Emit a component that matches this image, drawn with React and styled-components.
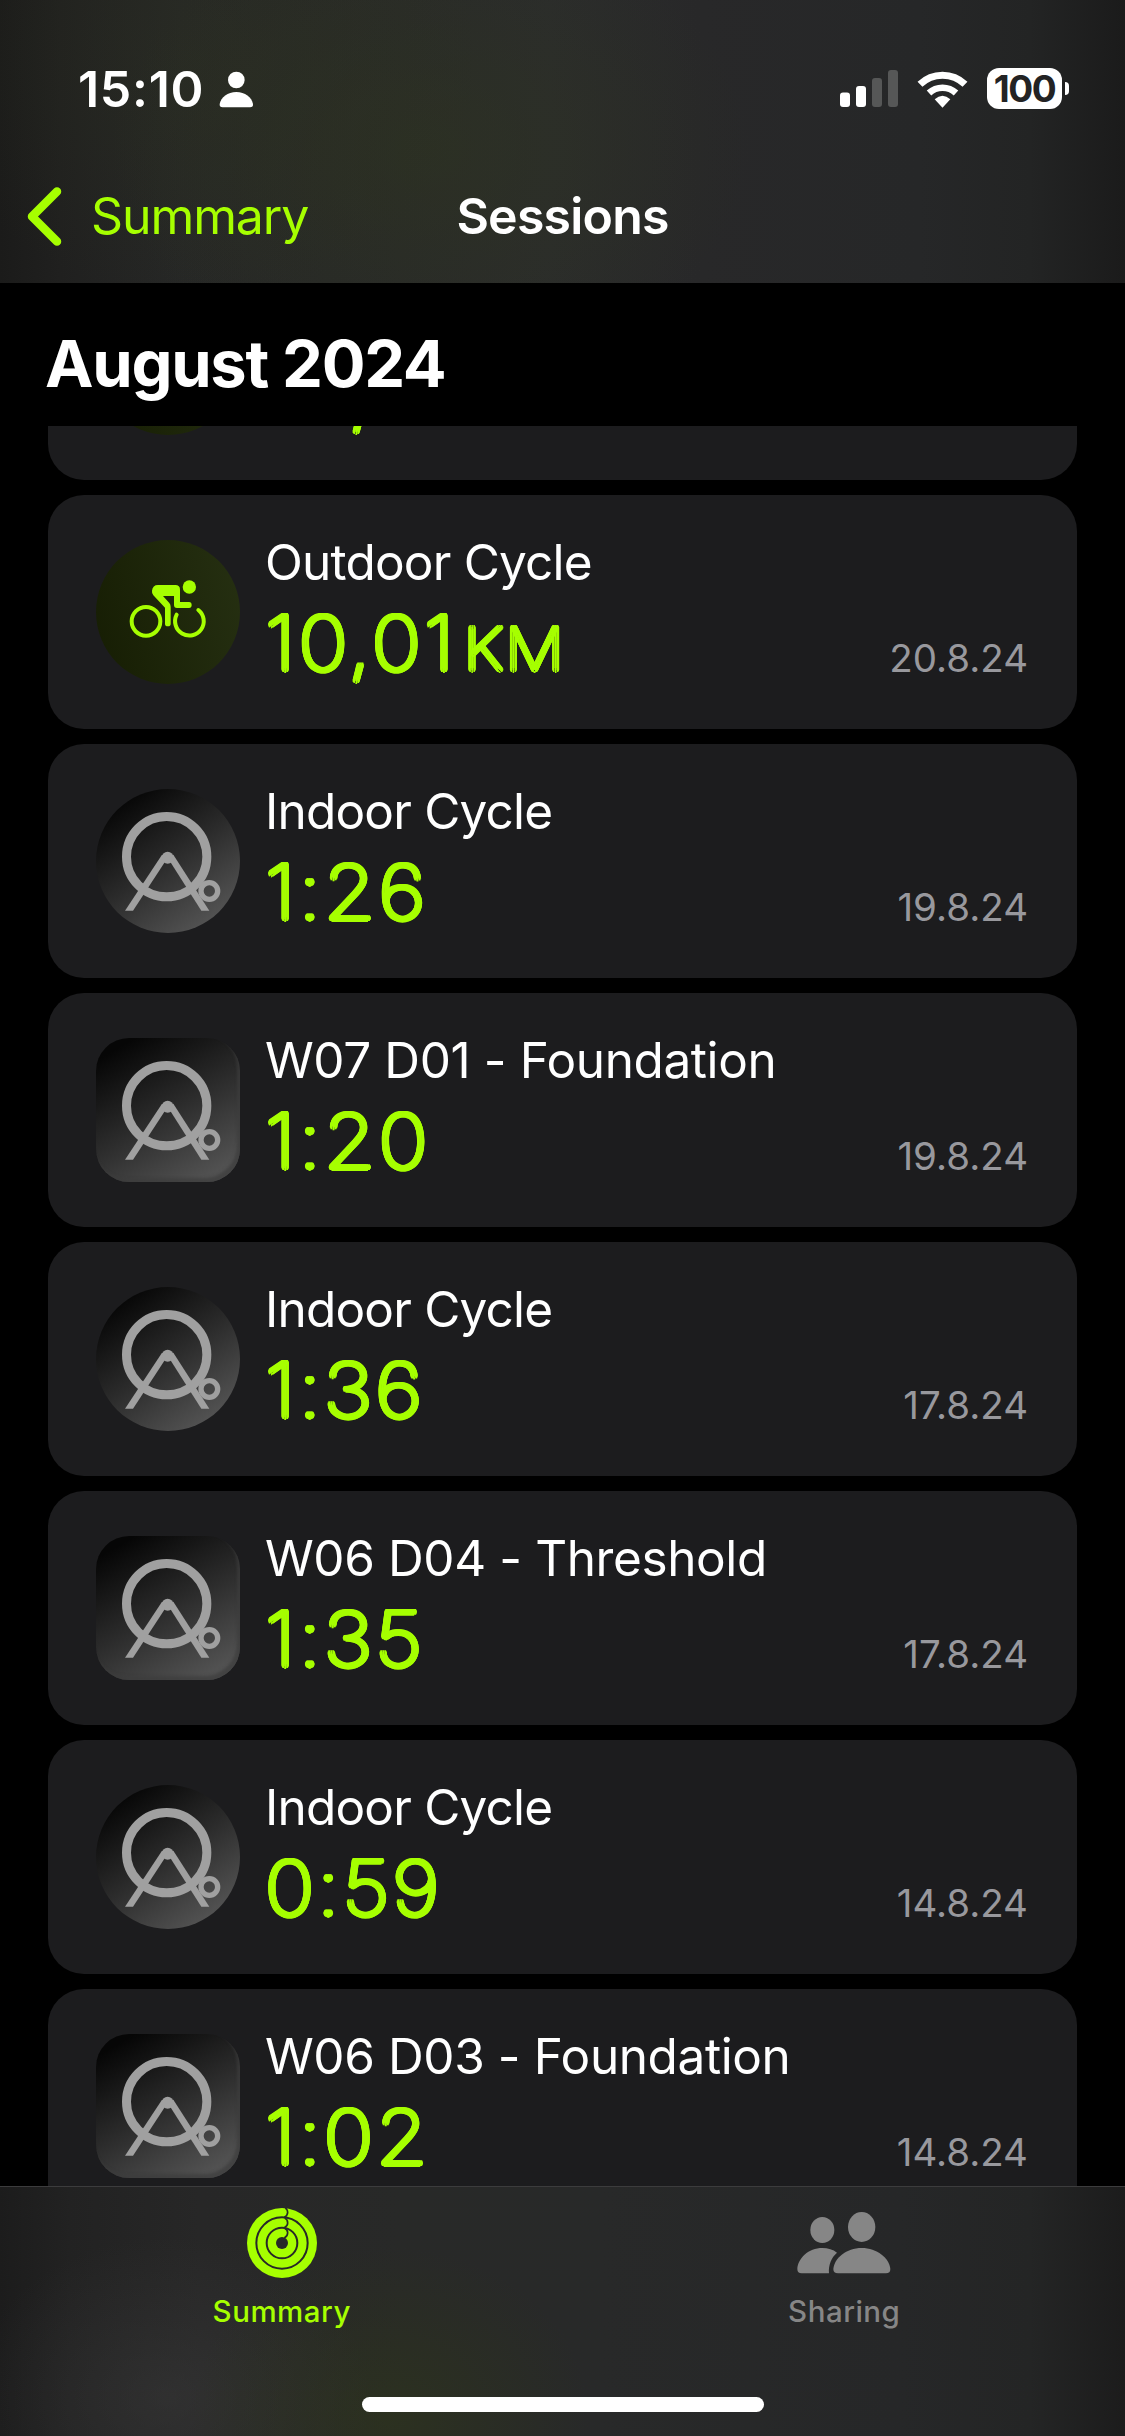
import React from 'react'
import styled, { createGlobalStyle } from 'styled-components'

const green = '#a6ff00'

const sessions = [
  { kind: 'outdoor', value: '10,01' },
  { kind: 'outdoor', title: 'Outdoor Cycle', value: '10,01', unit: 'KM', date: '20.8.24' },
  { kind: 'indoor', title: 'Indoor Cycle', value: '1:26', date: '19.8.24' },
  { kind: 'app', title: 'W07 D01 - Foundation', value: '1:20', date: '19.8.24' },
  { kind: 'indoor', title: 'Indoor Cycle', value: '1:36', date: '17.8.24' },
  { kind: 'app', title: 'W06 D04 - Threshold', value: '1:35', date: '17.8.24' },
  { kind: 'indoor', title: 'Indoor Cycle', value: '0:59', date: '14.8.24' },
  { kind: 'app', title: 'W06 D03 - Foundation', value: '1:02', date: '14.8.24' },
]

function CyclistIcon() {
  return (
    <svg width='144' height='144' viewBox='48 60 432 432' fill='none' stroke={green}>
      <circle cx='198' cy='304' r='43' strokeWidth='12' />
      <path d='M290 284 A43 43 0 1 0 355 270' strokeWidth='12' strokeLinecap='round' />
      <circle cx='328' cy='201' r='20' fill={green} stroke='none' />
      <path
        d='M234 195 H286 Q300 195 300 209 V246 H327 Q335 246 335 255 Q335 264 327 264 H291 Q282 264 282 255 V228 H249 L268 249 Q272 254 272 261 V311 Q272 319 263.500 319 Q255 319 255 311 V263 L220 226 Q215 220 216 212 Q218 195 234 195 Z'
        fill={green}
        stroke='none'
      />
    </svg>
  )
}

function TrainerIcon() {
  return (
    <svg width='144' height='144' viewBox='48 57 432 432' fill='#a0a0a0'>
      <circle cx='260' cy='260' r='120.500' fill='none' stroke='#a0a0a0' strokeWidth='27' />
      <path d='M135 422 L246 254 L264 262 L159 422 Z' />
      <path d='M388 422 L280 254 L262 262 L364 422 Z' />
      <circle cx='263' cy='263' r='18' />
      <circle cx='388' cy='363' r='25' fill='none' stroke='#a0a0a0' strokeWidth='16' />
    </svg>
  )
}

function RingsIcon() {
  return (
    <svg width='70' height='70' viewBox='0 0 210 210'>
      <circle cx='105' cy='105' r='105' fill={green} />
      <g fill='none' stroke='#272828'>
        <circle cx='105' cy='105' r='77' strokeWidth='6' />
        <circle cx='105' cy='105' r='46' strokeWidth='6' />
        <path
          d='M115 0 Q122 5 122 13 Q122 23 112 28 M113 30 Q122 34 122 45 Q122 54 112 59 M112 60 Q122 65 122 74 Q122 84 112 90'
          strokeWidth='5'
        />
      </g>
      <circle cx='105' cy='105' r='18' fill='#272828' />
    </svg>
  )
}

function PeopleIcon() {
  return (
    <svg width='94' height='62' viewBox='0 0 282 186' fill='#868686'>
      <ellipse cx='76' cy='54' rx='36' ry='39' />
      <ellipse cx='194' cy='45' rx='41' ry='45' />
      <path d='M14 184 Q1 184 1 171 C3 139 34 108 76 108 Q102 108 120 122 C103 137 94 158 96 184 Z' />
      <path d='M123 184 Q109 184 109 171 C112 138 148 108 194 108 C240 108 277 138 280 171 Q280 184 267 184 Z' />
    </svg>
  )
}

function StatusIcons() {
  return (
    <StatusRight>
      <svg width='58' height='37' viewBox='0 0 58 37' fill='#fff'>
        <rect x='0' y='22.500' width='10' height='14.500' rx='3' />
        <rect x='16' y='16' width='10' height='21' rx='3' />
        <rect x='32' y='8' width='10' height='29' rx='3' fill='#565757' />
        <rect x='48' y='0' width='10' height='37' rx='3' fill='#565757' />
      </svg>
      <svg width='51' height='38' viewBox='0 0 153 114' fill='none' stroke='#fff'>
        <path d='M9 43 A97 97 0 0 1 144 43' strokeWidth='21' />
        <path d='M36 69 A60 60 0 0 1 117 69' strokeWidth='20' />
        <path d='M76.500 113 L53 88 Q76.500 66 100 88 Z' fill='#fff' stroke='none' />
      </svg>
      <BatteryWrap>
        <Battery>100</Battery>
        <BatteryCap />
      </BatteryWrap>
    </StatusRight>
  )
}

function SessionIcon({ kind }) {
  return (
    <Badge $kind={kind}>{kind === 'outdoor' ? <CyclistIcon /> : <TrainerIcon />}</Badge>
  )
}

function SessionItem({ kind, title, value, unit, date }) {
  return (
    <Card>
      <SessionIcon kind={kind} />
      <CardText>
        <CardTitle $tracking={kind === 'app' ? '-0.4px' : '-0.8px'}>{title}</CardTitle>
        <Value>
          {value}
          {unit && <Unit>{unit}</Unit>}
        </Value>
      </CardText>
      {date && <CardDate>{date}</CardDate>}
    </Card>
  )
}

export default function App() {
  return (
    <Screen>
      <GlobalStyle />
      <Header>
        <StatusBar>
          <Clock>15:10</Clock>
          <svg width='35' height='37' viewBox='0 0 105 111' fill='#fff'>
            <circle cx='52' cy='27' r='25' />
            <path d='M11 109 Q1 109 2 99 C6 78 26 63 52 63 C78 63 98 78 102 99 Q103 109 93 109 Z' />
          </svg>
          <StatusIcons />
        </StatusBar>
        <NavBar>
          <Back>
            <svg width='35' height='59' viewBox='0 0 35 59' fill='none'>
              <path
                d='M30 4.500 L5 29.500 L30 54.500'
                stroke={green}
                strokeWidth='8.500'
                strokeLinecap='round'
                strokeLinejoin='round'
              />
            </svg>
            <BackLabel>Summary</BackLabel>
          </Back>
          <NavTitle>Sessions</NavTitle>
        </NavBar>
      </Header>
      <MonthTitle>August 2024</MonthTitle>
      <List>
        {sessions.map((session, i) => (
          <SessionItem key={i} {...session} />
        ))}
      </List>
      <TabBar>
        <Tabs>
          <Tab $active>
            <TabIcon>
              <RingsIcon />
            </TabIcon>
            Summary
          </Tab>
          <Tab>
            <TabIcon>
              <PeopleIcon />
            </TabIcon>
            Sharing
          </Tab>
        </Tabs>
        <HomeIndicator />
      </TabBar>
    </Screen>
  )
}

const GlobalStyle = createGlobalStyle`
  * {
    box-sizing: border-box;
  }
  body {
    margin: 0;
    background: #000;
    font-family: Inter, 'Liberation Sans', sans-serif;
  }
  svg {
    display: block;
    flex-shrink: 0;
  }
`

const Screen = styled.div`
  display: flex;
  flex-direction: column;
  width: 1125px;
  height: 2436px;
  overflow: hidden;
  background: #000;
  color: #fff;
`

const Header = styled.header`
  flex: none;
  height: 283px;
  background:
    radial-gradient(ellipse 320px 230px at 430px 150px, rgba(46, 53, 30, 0.5), transparent),
    radial-gradient(ellipse 280px 240px at 200px 60px, rgba(44, 48, 32, 0.4), transparent),
    linear-gradient(90deg, #1b1b1a 0, #20201f 60px, #262726 180px, #292a29 400px, #2b2c2c 550px, #282829 700px, #262728 920px, #232424 1030px, #1b1b1b 1125px);
`

const StatusBar = styled.div`
  display: flex;
  align-items: flex-start;
  height: 168px;
  padding: 71px 56px 0 78px;
`

const Clock = styled.span`
  width: 141px;
  margin-top: -12px;
  font-size: 50px;
  line-height: 60px;
  font-weight: 600;
  letter-spacing: 0.7px;
`

const StatusRight = styled.div`
  display: flex;
  align-items: flex-start;
  margin: -1px 0 0 auto;
  gap: 19px;
`

const BatteryWrap = styled.div`
  display: flex;
  align-items: center;
  gap: 3px;
  margin-top: -2px;
`

const Battery = styled.div`
  width: 75px;
  height: 41px;
  border-radius: 12px;
  background: #fff;
  color: #232324;
  font-size: 37px;
  line-height: 41px;
  font-weight: 700;
  letter-spacing: -1.5px;
  text-align: center;
`

const BatteryCap = styled.div`
  width: 4px;
  height: 13px;
  border-radius: 0 4px 4px 0;
  background: #fff;
`

const NavBar = styled.nav`
  display: grid;
  grid-template-columns: 1fr auto 1fr;
  align-items: center;
  height: 96px;
  padding: 0 27px;
`

const Back = styled.div`
  display: flex;
  align-items: center;
  gap: 29px;
  color: ${green};
`

const BackLabel = styled.span`
  font-size: 50px;
  line-height: 60px;
  letter-spacing: -1.1px;
`

const NavTitle = styled.h1`
  margin: 0;
  font-size: 50px;
  line-height: 60px;
  font-weight: 600;
  letter-spacing: -0.8px;
`

const MonthTitle = styled.h2`
  flex: none;
  height: 143px;
  margin: 0;
  padding: 41px 45px 0;
  font-size: 65px;
  line-height: 80px;
  font-weight: 700;
  letter-spacing: -1.3px;
`

const List = styled.main`
  flex: 1;
  min-height: 0;
  display: flex;
  flex-direction: column;
  gap: 15px;
  padding: 0 48px;
  overflow: hidden;

  /* scrolled part way through the first session */
  & > :first-child {
    margin-top: -180px;
  }
`

const Card = styled.article`
  flex: none;
  display: flex;
  height: 234px;
  padding: 0 49px 0 48px;
  border-radius: 36px;
  background: #1c1c1e;
`

const badgeBackground = {
  outdoor: 'linear-gradient(75deg, #161d03, #263012)',
  indoor: 'linear-gradient(145deg, #060606 12%, #2b2b2b 50%, #585858 92%)',
  app: 'linear-gradient(150deg, #060606 10%, #2b2b2b 50%, #575757 95%)',
}

const Badge = styled.div`
  flex: none;
  width: 144px;
  height: 144px;
  margin: 45px 25px 0 0;
  border-radius: ${(p) => (p.$kind === 'app' ? '33px' : '50%')};
  background: ${(p) => badgeBackground[p.$kind]};
  box-shadow: ${(p) => (p.$kind === 'app' ? 'inset -3px -4px 3px rgba(60, 60, 60, 0.7)' : 'none')};
`

const CardText = styled.div`
  flex: 1;
  padding-top: 37px;
`

const CardTitle = styled.h3`
  height: 60px;
  margin: 0 0 1px;
  font-size: 49.5px;
  line-height: 60px;
  font-weight: 400;
  letter-spacing: ${(p) => p.$tracking};
`

/* hairline weight thickened on every side so the stroke ends come out round */
const Value = styled.div`
  width: max-content;
  color: ${green};
  font-size: 75px;
  line-height: 100px;
  font-weight: 100;
  letter-spacing: 2.6px;
  transform: scaleX(1.11);
  transform-origin: left;
  text-shadow:
    2.5px 0 ${green}, -2.5px 0 ${green}, 0 2.5px ${green}, 0 -2.5px ${green},
    1.8px 1.8px ${green}, -1.8px 1.8px ${green}, 1.8px -1.8px ${green}, -1.8px -1.8px ${green},
    2.3px 1px ${green}, -2.3px 1px ${green}, 2.3px -1px ${green}, -2.3px -1px ${green};
`

const Unit = styled.span`
  margin-left: 6px;
  font-size: 59px;
  letter-spacing: 2px;
`

const CardDate = styled.time`
  align-self: flex-end;
  margin-bottom: 47px;
  color: #98989d;
  font-size: 38.5px;
  line-height: 48px;
`

const TabBar = styled.footer`
  flex: none;
  display: flex;
  flex-direction: column;
  align-items: center;
  height: 250px;
  border-top: 1px solid #3c3c3d;
  background:
    radial-gradient(ellipse 200px 170px at 390px 230px, rgba(46, 54, 26, 0.6), transparent),
    radial-gradient(ellipse 200px 160px at 170px 210px, rgba(58, 58, 58, 0.5), transparent),
    linear-gradient(90deg, #1c1c1c 0, #222222 70px, #272727 200px, #282928 400px, #282929 600px, #262728 900px, #242525 1030px, #1c1c1c 1125px);
`

const Tabs = styled.div`
  display: grid;
  grid-template-columns: 1fr 1fr;
  width: 100%;
  height: 210px;
`

const Tab = styled.div`
  display: flex;
  flex-direction: column;
  align-items: center;
  padding: 14px 0 0 1px;
  color: ${(p) => (p.$active ? green : '#868686')};
  font-size: 29.5px;
  line-height: 36px;
  font-weight: 500;
  letter-spacing: 0.5px;
`

const TabIcon = styled.div`
  display: flex;
  align-items: center;
  height: 84px;
  margin-bottom: 8px;
`

const HomeIndicator = styled.div`
  width: 402px;
  height: 15px;
  border-radius: 8px;
  background: #fff;
`
